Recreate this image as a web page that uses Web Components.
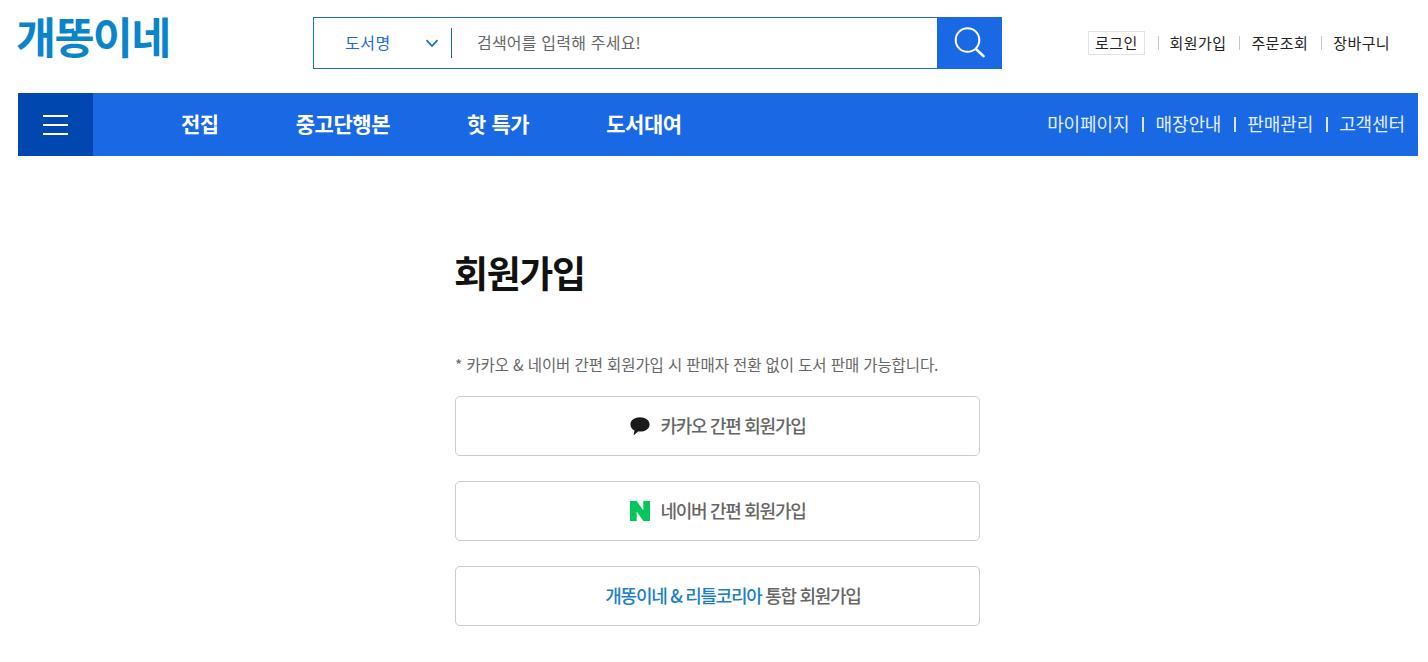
<!DOCTYPE html>
<html lang="ko">
<head>
<meta charset="utf-8">
<title>회원가입</title>
<style>
html, body { margin: 0; background: #fff; }
body { font-family: "Noto Sans CJK KR", "Noto Sans", sans-serif; overflow: hidden; }
</style>
</head>
<body>
<site-app></site-app>
<script>
const headerTemplate = document.createElement("template")
headerTemplate.innerHTML = /*html*/`
    <style>
    :host { display: flex; height: 93px; padding-left: 18px; width: 1410px; box-sizing: border-box; }
    #logo {
        width: 295px;
        margin-left: -2px;
        margin-right: 2px;
        padding-top: 4px;
        box-sizing: border-box;
        font-size: 43.5px;
        line-height: 64px;
        height: 64px;
        font-weight: 700;
        color: #0a85c9;
        letter-spacing: -1.6px;
        white-space: nowrap;
    }
    #search {
        margin-top: 17px;
        width: 689px;
        height: 52px;
        box-sizing: border-box;
        border: 1px solid #1969e5;
        display: flex;
        align-items: center;
    }
    #type {
        width: 138px;
        height: 30px;
        box-sizing: border-box;
        border-right: 1px solid #1a5fb8;
        display: flex;
        align-items: center;
        justify-content: space-between;
        padding: 0 12px 0 31px;
        color: #1969e5;
        font-size: 16px;
        letter-spacing: 0.55px;
    }
    #type span { margin-top: -3px; }
    #word { flex: 1; padding-left: 25px; margin-top: -3px; color: #666; font-size: 16px; letter-spacing: 0.2px; }
    #go {
        width: 65px;
        height: 52px;
        margin-right: -1px;
        background: #1969e5;
        display: flex;
        align-items: center;
        justify-content: center;
    }
    #util {
        margin: 31px 0 0 86px;
        display: flex;
        align-items: center;
        height: 24px;
        font-size: 15px;
        letter-spacing: 0.4px;
        color: #222;
        white-space: nowrap;
    }
    #util span { display: block; padding: 0 13px 0 11px; line-height: 14px; border-left: 1px solid #c4c4c4; }
    #util span.login { border: 1px solid #e2e2e2; padding: 3px 6px; margin-right: 13px; line-height: 16px; }
    </style>
    <div id="logo">개똥이네</div>
    <div id="search">
        <div id="type">
            <span>도서명</span>
            <svg width="14" height="9" viewBox="0 0 14 9" fill="none" stroke="#1969e5" stroke-width="1.8"><path d="M1.500 1.200 7 7l5.500-5.800"/></svg>
        </div>
        <div id="word">검색어를 입력해 주세요!</div>
        <div id="go">
            <svg width="32" height="32" viewBox="0 0 32 32" fill="none" stroke="#fff"><circle cx="13.500" cy="13" r="11.800" stroke-width="2"/><path d="M22.500 22.500l7 6.600" stroke-width="2.600" stroke-linecap="round"/></svg>
        </div>
    </div>
    <div id="util">
        <span class="login">로그인</span>
        <span>회원가입</span>
        <span>주문조회</span>
        <span>장바구니</span>
    </div>
`

class siteHeader extends HTMLElement
{
    constructor(){
        super()
        const shadow = this.attachShadow({mode: "open"})
        shadow.append(headerTemplate.content.cloneNode(true))
    }
}

const navTemplate = document.createElement("template")
navTemplate.innerHTML = /*html*/`
    <style>
    :host {
        display: flex;
        margin-left: 18px;
        width: 1400px;
        height: 63px;
        background: #1969e5;
        color: #fff;
        white-space: nowrap;
    }
    #burger {
        width: 75px;
        background: #0047b0;
        display: flex;
        flex-direction: column;
        justify-content: center;
        align-items: center;
        gap: 7px;
    }
    #burger i { display: block; width: 25px; height: 2px; background: #fff; }
    #main {
        flex: 1;
        display: flex;
        align-items: center;
        gap: 77px;
        padding: 0 0 4px 88px;
        font-size: 21px;
        font-weight: 700;
        letter-spacing: -0.45px;
    }
    #side {
        display: flex;
        align-items: center;
        padding: 0 13px 3px 0;
        font-size: 18px;
        letter-spacing: -0.1px;
        color: #e6efff;
    }
    #side i { display: block; width: 2.500px; height: 15px; margin: 3px 11px 0 12.500px; background: #dbe7fb; }
    </style>
    <div id="burger"><i></i><i></i><i></i></div>
    <div id="main">
        <span>전집</span>
        <span>중고단행본</span>
        <span>핫 특가</span>
        <span>도서대여</span>
    </div>
    <div id="side">
        <span>마이페이지</span><i></i>
        <span>매장안내</span><i></i>
        <span>판매관리</span><i></i>
        <span>고객센터</span>
    </div>
`

class siteNav extends HTMLElement
{
    constructor(){
        super()
        const shadow = this.attachShadow({mode: "open"})
        shadow.append(navTemplate.content.cloneNode(true))
    }
}

const buttonTemplate = document.createElement("template")
buttonTemplate.innerHTML = /*html*/`
    <style>
    :host {
        display: flex;
        align-items: center;
        justify-content: center;
        gap: 11px;
        height: 60px;
        box-sizing: border-box;
        border: 1px solid #ccc;
        border-radius: 5px;
        font-size: 18px;
        font-weight: 500;
        letter-spacing: -1.300px;
        color: #666;
        white-space: nowrap;
    }
    #label { margin-top: -2px; }
    ::slotted(b) { color: #1a7fc4; font-weight: 500; }
    </style>
    <slot name="icon"></slot>
    <span id="label"><slot></slot></span>
`

class joinButton extends HTMLElement
{
    constructor(){
        super()
        const shadow = this.attachShadow({mode: "open"})
        shadow.append(buttonTemplate.content.cloneNode(true))
    }
}

const joinTemplate = document.createElement("template")
joinTemplate.innerHTML = /*html*/`
    <style>
    :host { display: block; width: 525px; margin: 0 0 0 455px; }
    h1 {
        margin: 0 0 0 -1px;
        padding-top: 91px;
        font-size: 37px;
        line-height: 50px;
        font-weight: 700;
        letter-spacing: -1.4px;
        color: #111;
    }
    p {
        margin: 0;
        padding-top: 53px;
        height: 28px;
        line-height: 28px;
        font-size: 15.500px;
        letter-spacing: -0.1px;
        color: #666;
        white-space: nowrap;
    }
    #list { display: flex; flex-direction: column; gap: 25px; margin-top: 18px; }
    svg { display: block; }
    #spacer { display: block; width: 20px; height: 20px; }
    </style>
    <h1>회원가입</h1>
    <p>* 카카오 &amp; 네이버 간편 회원가입 시 판매자 전환 없이 도서 판매 가능합니다.</p>
    <div id="list">
        <join-button>
            <svg slot="icon" width="20" height="20" viewBox="0 0 20 20"><path fill="#1a1a1a" d="M10 1.200c5.200 0 9.600 2.900 9.600 7.200 0 4.200-4.400 7.200-9.600 7.200-.7 0-1.300 0-2-.1l-3.900 3.400-.5-.2.900-4.200C2 13.200.4 11 .4 8.400.4 4.100 4.800 1.200 10 1.200z"/></svg>
            카카오 간편 회원가입
        </join-button>
        <join-button>
            <svg slot="icon" width="20" height="20" viewBox="0 0 20 20"><path fill="#03c75a" d="M0 0h6.700l6.600 9.500V0H20v20h-6.700L6.700 10.500V20H0z"/></svg>
            네이버 간편 회원가입
        </join-button>
        <join-button><span id="spacer" slot="icon"></span><b>개똥이네 &amp; 리틀코리아</b> 통합 회원가입</join-button>
    </div>
`

class joinPanel extends HTMLElement
{
    constructor(){
        super()
        const shadow = this.attachShadow({mode: "open"})
        shadow.append(joinTemplate.content.cloneNode(true))
    }
}

const appTemplate = document.createElement("template")
appTemplate.innerHTML = /*html*/`
    <style>
    :host { display: block; width: 1428px; height: 662px; overflow: hidden; }
    </style>
    <site-header></site-header>
    <site-nav></site-nav>
    <join-panel></join-panel>
`

class siteApp extends HTMLElement
{
    constructor(){
        super()
        const shadow = this.attachShadow({mode: "open"})
        shadow.append(appTemplate.content.cloneNode(true))
    }
}

customElements.define("site-header", siteHeader)
customElements.define("site-nav", siteNav)
customElements.define("join-button", joinButton)
customElements.define("join-panel", joinPanel)
customElements.define("site-app", siteApp)
</script>
</body>
</html>
